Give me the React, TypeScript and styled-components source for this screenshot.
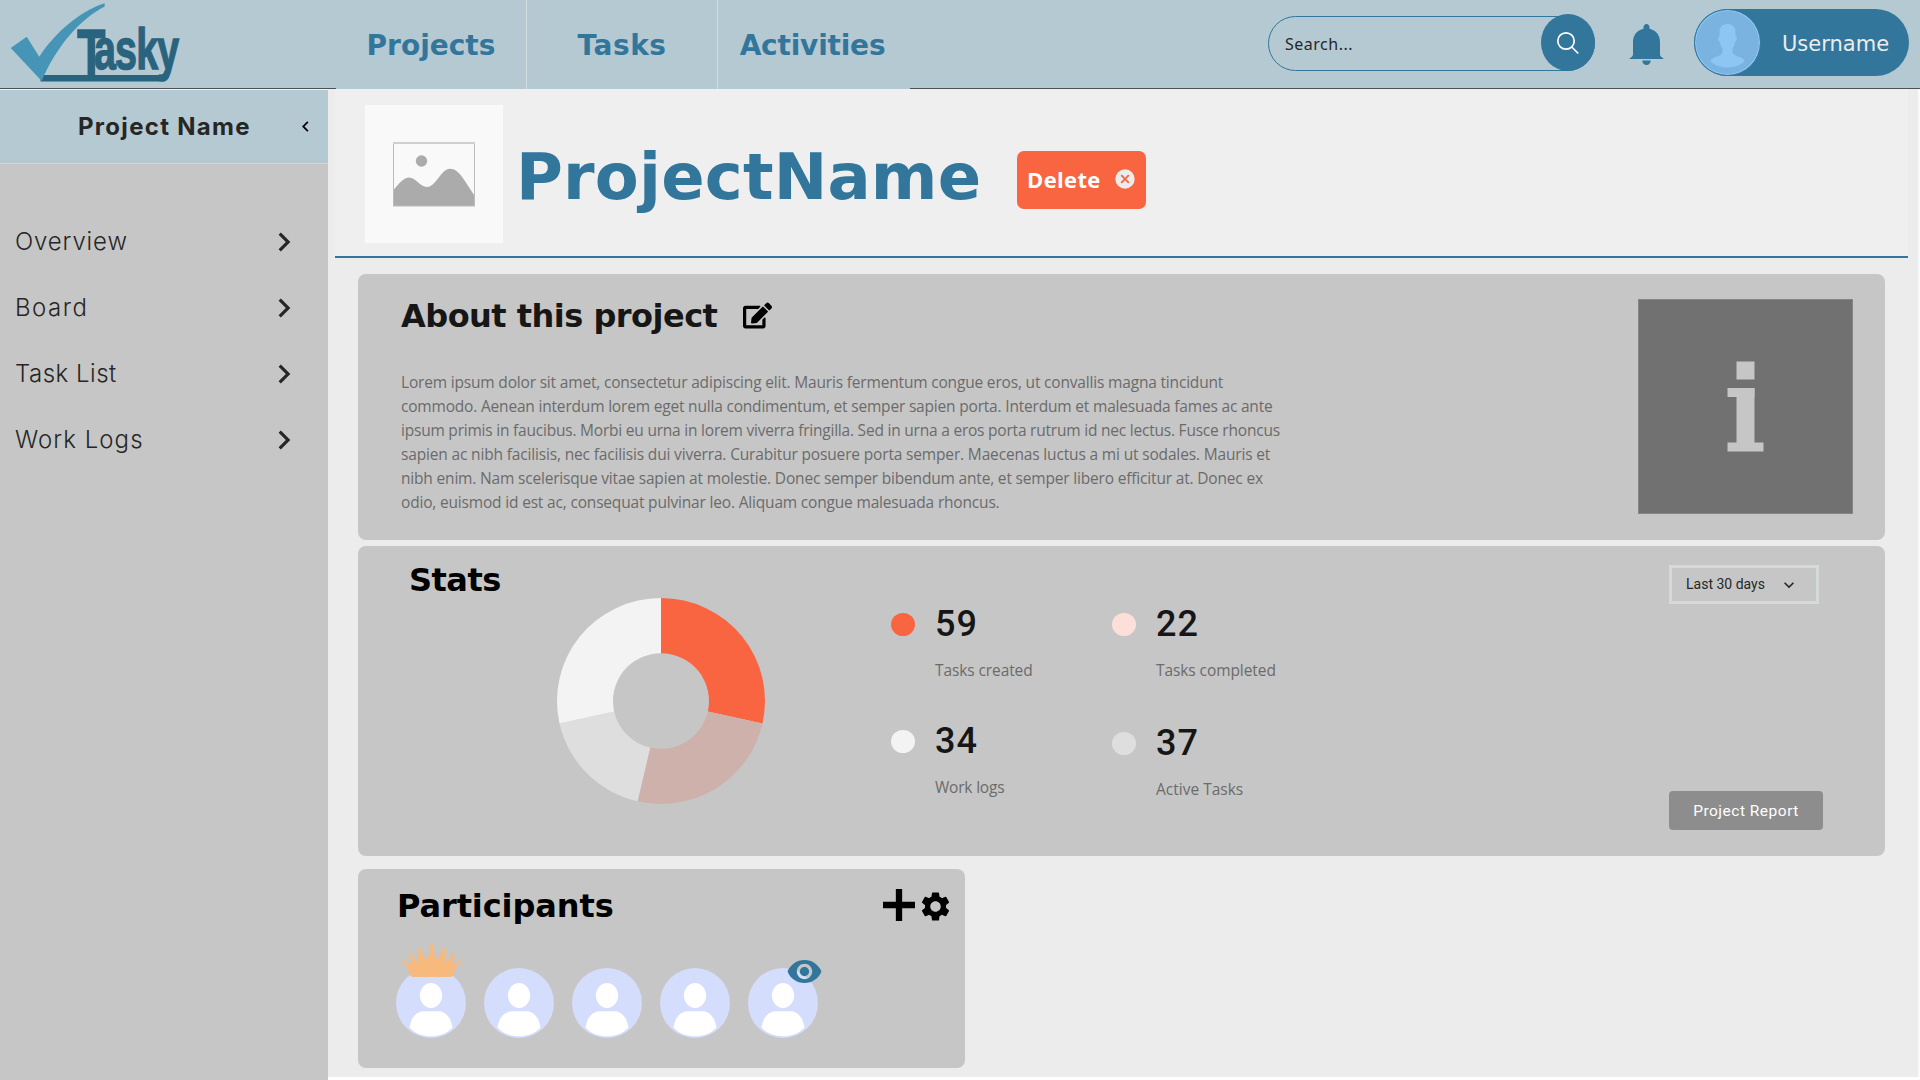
import React from "react";
import styled, { createGlobalStyle } from "styled-components";
import { MdChevronRight, MdChevronLeft, MdExpandMore, MdSettings, MdVisibility } from "react-icons/md";
import { FaEdit } from "react-icons/fa";

const C = {
  sky: "#b5c9d3",
  blue: "#32769c",
  orange: "#f96540",
  card: "#c6c6c6",
  page: "#ececec",
};
const HEAD = '"DejaVu Sans", Verdana, sans-serif';
const BODY = '"Open Sans", "Noto Sans", sans-serif';
const SIDE = 'Inter, "Noto Sans", sans-serif';

const Global = createGlobalStyle`
  * { box-sizing: border-box; }
  body { margin: 0; background: #fff; overflow: hidden; }
  svg { display: block; flex: none; }
`;

const Screen = styled.div`
  width: 1920px;
  height: 1080px;
  display: flex;
  flex-direction: column;
`;

/* ---------- top bar ---------- */
const TopBar = styled.header`
  display: flex;
  flex: none;
  height: 89px;
  background: ${C.sky};
`;
const LogoArea = styled.div`
  width: 336px;
  border-bottom: 1px solid #4d5258;
`;
const Nav = styled.nav`
  display: flex;
  width: 574px;
`;
const Tab = styled.a<{ $w: number; $ls: number; $last?: boolean }>`
  width: ${(p) => p.$w}px;
  height: 89px;
  padding-right: ${(p) => (p.$last ? 3 : 0)}px;
  border-right: ${(p) => (p.$last ? "none" : "1px solid #d4dade")};
  font: bold 28px/91px ${HEAD};
  letter-spacing: ${(p) => p.$ls}px;
  color: ${C.blue};
  text-align: center;
`;
const Tools = styled.div`
  flex: 1;
  display: flex;
  align-items: flex-start;
  padding-left: 358px;
  border-bottom: 1px solid #4d5258;
`;
const Search = styled.div`
  display: flex;
  justify-content: space-between;
  width: 327px;
  height: 55px;
  margin-top: 16px;
  padding-left: 16px;
  border: 1px solid ${C.blue};
  border-radius: 28px;
  font: 16px/54px "Noto Sans", sans-serif;
  letter-spacing: 0.5px;
  color: #262626;
`;
const SearchButton = styled.button`
  display: flex;
  align-items: center;
  justify-content: center;
  width: 54px;
  height: 57px;
  margin: -3px -1px 0 0;
  padding: 0;
  border: 0;
  border-radius: 50%;
  background: ${C.blue};
`;
const BellSlot = styled.div`
  margin: 24px 30px 0 34px;
`;
const UserPill = styled.div`
  display: flex;
  width: 215px;
  height: 67px;
  margin-top: 9px;
  border-radius: 34px;
  background: ${C.blue};
  font: 21px/70px ${HEAD};
  color: #ececec;
`;
const UserAvatar = styled.div`
  width: 67px;
  height: 67px;
  margin-right: 21px;
  border: 1px solid ${C.blue};
  border-radius: 50%;
  background: #7ab3e0;
  box-shadow: inset 0 0 0 1px #8ec8f8;
  overflow: hidden;
`;

/* ---------- sidebar ---------- */
const Content = styled.div`
  display: flex;
  flex: 1;
`;
const Sidebar = styled.aside`
  width: 328px;
  border-top: 1px solid #f4f4f4;
  background: ${C.card};
`;
const SideHead = styled.div`
  display: flex;
  align-items: center;
  height: 74px;
  padding-left: 78px;
  border-bottom: 1px solid #d0d6d9;
  background: ${C.sky};
`;
const SideTitle = styled.div`
  width: 217px;
  font: bold 24px/73px ${SIDE};
  letter-spacing: 1.3px;
  color: #262626;
`;
const SideList = styled.div`
  padding-top: 45px;
`;
const SideItem = styled.div<{ $ls: number }>`
  display: flex;
  align-items: center;
  justify-content: space-between;
  height: 66px;
  padding: 0 25px 0 15px;
  font: 300 24px/66px ${SIDE};
  letter-spacing: ${(p) => p.$ls}px;
  color: #262626;
`;

/* ---------- main ---------- */
const Main = styled.main`
  flex: 1;
  height: 988px;
  padding-left: 7px;
  border-right: 2px solid #fafafa;
  background: ${C.page};
`;
const ProjectHeader = styled.section`
  display: flex;
  width: 1573px;
  height: 169px;
  padding-left: 30px;
  border-bottom: 2px solid ${C.blue};
  background: #efefef;
`;
const Thumb = styled.div`
  display: flex;
  align-items: center;
  justify-content: center;
  width: 138px;
  height: 138px;
  margin-top: 16px;
  background: #f9f9f9;
`;
const ProjectTitle = styled.h1`
  width: 501px;
  margin: 50px 0 0 13px;
  font: bold 64px/76px ${HEAD};
  letter-spacing: 0.2px;
  color: ${C.blue};
`;
const DeleteButton = styled.button`
  display: flex;
  align-items: center;
  gap: 14px;
  width: 129px;
  height: 58px;
  margin-top: 62px;
  padding: 0 0 2px 10px;
  border: 0;
  border-radius: 7px;
  background: ${C.orange};
  font: bold 22px/56px ${BODY};
  letter-spacing: 0.35px;
  color: #fff;
`;
const Cards = styled.div`
  display: flex;
  flex-direction: column;
  width: 1550px;
  padding: 16px 0 0 23px;
`;
const Card = styled.section<{ $h: number; $w?: number; $mt?: number }>`
  display: flex;
  width: ${(p) => p.$w ?? 1527}px;
  height: ${(p) => p.$h}px;
  margin-top: ${(p) => p.$mt ?? 0}px;
  border-radius: 8px;
  background: ${C.card};
`;
const Heading = styled.h2<{ $ls?: number; $color?: string }>`
  margin: 0;
  font: bold 32px/40px ${HEAD};
  letter-spacing: ${(p) => p.$ls ?? 0}px;
  color: ${(p) => p.$color ?? "#000"};
  white-space: nowrap;
`;
const AboutText = styled.div`
  width: 1280px;
  padding: 22px 0 0 43px;
`;
const AboutTop = styled.div`
  display: flex;
  align-items: center;
  gap: 26px;
`;
const EditSlot = styled.div`
  padding-bottom: 2px;
`;
const Paragraph = styled.p`
  margin: 34px 0 0;
  font: 15.5px/24px ${BODY};
  color: #6b6b6b;
`;
const Line = styled.span<{ $ls: number }>`
  display: block;
  letter-spacing: ${(p) => p.$ls}px;
  white-space: nowrap;
`;
const InfoBox = styled.div`
  width: 215px;
  height: 215px;
  margin-top: 25px;
  border: 1px solid #858585;
  background: #717171;
`;
const StatsTitle = styled.div`
  width: 147px;
  padding: 14px 0 0 51px;
`;
const ChartSlot = styled.div`
  width: 386px;
  padding: 52px 0 0 52px;
`;
const Legend = styled.div`
  display: grid;
  grid-template-columns: 221px 330px;
  grid-template-rows: 117px 117px;
  width: 551px;
  padding-top: 54px;
`;
const Stat = styled.div<{ $dy?: number }>`
  display: grid;
  grid-template-columns: 24px 1fr;
  grid-template-rows: 48px 44px;
  column-gap: 20px;
  align-content: start;
  align-items: center;
  padding-top: ${(p) => p.$dy ?? 0}px;
`;
const Dot = styled.span<{ $c: string }>`
  width: 24px;
  height: 23px;
  border-radius: 50%;
  background: ${(p) => p.$c};
`;
const StatValue = styled.span`
  font: 500 36px/50px Roboto, sans-serif;
  letter-spacing: 1.1px;
  color: #161616;
`;
const StatLabel = styled.span<{ $ls: number }>`
  grid-column: 2;
  font: 15.5px/24px ${BODY};
  letter-spacing: ${(p) => p.$ls}px;
  color: #6b6b6b;
`;
const StatsActions = styled.div`
  display: flex;
  flex-direction: column;
  justify-content: space-between;
  margin-left: 227px;
  padding: 19px 0 26px;
`;
const Period = styled.div`
  display: flex;
  align-items: center;
  gap: 14px;
  width: 150px;
  height: 39px;
  padding-left: 14px;
  border: 3px solid #d5d9da;
  font: 14px/33px Roboto, sans-serif;
  letter-spacing: 0;
  color: #262626;
`;
const ReportButton = styled.button`
  width: 154px;
  height: 39px;
  padding: 1px 0 0;
  border: 0;
  border-radius: 4px;
  background: #8d8d8d;
  font: 15.5px/38px Roboto, sans-serif;
  letter-spacing: 0.5px;
  color: #fff;
`;
const People = styled.div`
  flex: 1;
  display: flex;
  flex-direction: column;
  padding: 17px 15px 0 38px;
`;
const PeopleTop = styled.div`
  display: flex;
  align-items: center;
  justify-content: space-between;
  padding-left: 1px;
`;
const PeopleTools = styled.div`
  display: flex;
  align-items: center;
  gap: 3px;
  margin-right: -3px;
`;
const PlusSlot = styled.div`
  padding-bottom: 2px;
`;
const Row = styled.div`
  display: flex;
  gap: 18px;
  margin-top: 42px;
`;
const Person = styled.div`
  position: relative;
  width: 70px;
  height: 70px;
`;
const Badge = styled.div<{ $x: number; $y: number }>`
  position: absolute;
  left: ${(p) => p.$x}px;
  top: ${(p) => p.$y}px;
`;

/* ---------- drawings ---------- */
const Logo = () => (
  <svg width="220" height="88" viewBox="0 0 220 88" overflow="visible">
    <path d="M40.500 75H160c2.500 0 3.500-1 4.300-4l4.700 4c-1.500 4.500-3 6.500-6.500 6.500H40.500z" fill="#2a637e" />
    <text
      transform="translate(77.300 77) scale(.68 1)"
      fill="#2a637e"
      stroke="#2a637e"
      strokeWidth="1.400"
      fontFamily='"Liberation Sans", Arial, sans-serif'
      fontWeight="bold"
    >
      <tspan fontSize="68">T</tspan>
      <tspan fontSize="58" dx="-17" dy="-7.700" letterSpacing="-1.200">asky</tspan>
    </text>
    <path d="M10.700 48 26.700 36.700 39.300 56.700C55 33 80 11 104.700 3.300V6.500C80 19 56 47 41.700 81z" fill="#4695b6" />
  </svg>
);

const Bell = () => (
  <svg width="35" height="41" viewBox="0 0 35 41">
    <path
      fill={C.blue}
      d="M17.500 0c1.700 0 3 1.400 3 3.200v1.500C27 6.300 31 11 31 18v12.500c0 1 .6 1.700 1.500 2.500l1.800 1.400c.5.400.700.6.700.600H0s.2-.2.7-.600L2.500 33C3.400 32.200 4 31.500 4 30.500V18C4 11 8 6.300 14.500 4.700V3.200C14.500 1.400 15.800 0 17.500 0zM13.300 36.500h8.400c0 2.500-1.800 4.500-4.200 4.500s-4.200-2-4.200-4.500z"
    />
  </svg>
);

const Silhouette = () => (
  <svg width="65" height="65" viewBox="0 0 65 65">
    <path
      fill="#8cc6f5"
      d="M32.500 14c5.200 0 8 3 8 8v4.500c2.200 0 1.500 5-.5 5.500-.4 3.500-1.500 5-2.500 6.500v3.500c1 3.500 5 4.200 7.500 5.200 2 .8 4.500 2.300 4.500 3.800-3.500 4.300-10 6.500-17 6.500s-13.500-2.200-17-6.500c0-1.500 2.500-3 4.500-3.800 2.500-1 6.500-1.700 7.500-5.200v-3.500c-1-1.500-2.100-3-2.500-6.500-2-.5-2.700-5.500-.5-5.500V22c0-5 2.800-8 8-8z"
    />
  </svg>
);

const Picture = () => (
  <svg width="82" height="65" viewBox="0 0 82 65">
    <path d="M0 49C6 41 11 35.500 16 35.500c7 0 11 9.500 18 9.500 9 0 14-18.300 23-18.300 9.500 0 15 13.300 25 27.300v10H0z" fill="#ababab" />
    <circle cx="28.500" cy="19" r="5.700" fill="#ababab" />
    <rect x=".5" y=".5" width="81" height="63.500" fill="none" stroke="#bcbcbc" />
    <path d="M0 1h82" stroke="#cfcfcf" strokeWidth="2" />
  </svg>
);

const Donut = () => {
  const cx = 104, cy = 103;
  const slices = [
    { from: 0, to: 102.600, c: C.orange },
    { from: 102.600, to: 193, c: "#ceb1ab" },
    { from: 193, to: 257.400, c: "#dedede" },
    { from: 257.400, to: 360, c: "#f3f3f3" },
  ];
  const at = (deg: number, rx: number, ry: number) => {
    const a = (deg * Math.PI) / 180;
    return `${cx + rx * Math.sin(a)} ${cy - ry * Math.cos(a)}`;
  };
  return (
    <svg width="208" height="206" viewBox="0 0 208 206">
      {slices.map((s) => (
        <path
          key={s.from}
          fill={s.c}
          d={`M${at(s.from, 104, 103)}A104 103 0 0 1 ${at(s.to, 104, 103)}L${at(s.to, 48, 47.800)}A48 47.800 0 0 0 ${at(s.from, 48, 47.800)}Z`}
        />
      ))}
    </svg>
  );
};

const Face = () => (
  <svg width="70" height="70" viewBox="0 0 70 70">
    <circle cx="35" cy="35" r="35" fill="#d5ddfc" />
    <ellipse cx="35" cy="27.500" rx="11.100" ry="12.400" fill="#fff" />
    <path d="M13.400 59.500C15 50 20 43.300 28 43.300h14C50 43.300 55 50 56.600 59.500 51 65.500 43.500 68.300 35 68.300S19 65.500 13.400 59.500z" fill="#fff" />
  </svg>
);

const Crown = () => (
  <svg width="60" height="33" viewBox="0 0 60 33" fill="#f8ba7c">
    <path d="M11 33C7.500 33 7.500 27 4.500 21.500L2 19.500 3.500 18c2 1.300 3 1.800 5 1.300.6-1.500.5-4-.5-7l1.500-.800L15.300 18.300l1.700-12h1.500l6.200 10.500L29 2h1.400L34.800 16.800l6.200-10.500h1.500l1.700 12 5.800-6.800 1.500.8c-1 3-1.100 5.500-.5 7 2 .5 3 0 5-1.300l1.500 1.500-2.500 2C52 27 52 33 48.500 33z" />
    <circle cx="2" cy="18.400" r="2" />
    <circle cx="8.700" cy="11.500" r="2.100" />
    <circle cx="17.800" cy="6" r="2.100" />
    <circle cx="29.700" cy="2.200" r="2.200" />
    <circle cx="41.600" cy="6" r="2.100" />
    <circle cx="50.800" cy="11.500" r="2.100" />
    <circle cx="57.400" cy="18.400" r="2" />
  </svg>
);

const sideItems = [
  { t: "Overview", ls: 0.85 },
  { t: "Board", ls: 1.5 },
  { t: "Task List", ls: 0.5 },
  { t: "Work Logs", ls: 1.05 },
];

const about = [
  { t: "Lorem ipsum dolor sit amet, consectetur adipiscing elit. Mauris fermentum congue eros, ut convallis magna tincidunt", ls: -0.18 },
  { t: "commodo. Aenean interdum lorem eget nulla condimentum, et semper sapien porta. Interdum et malesuada fames ac ante", ls: -0.19 },
  { t: "ipsum primis in faucibus. Morbi eu urna in lorem viverra fringilla. Sed in urna a eros porta rutrum id nec lectus. Fusce rhoncus", ls: -0.215 },
  { t: "sapien ac nibh facilisis, nec facilisis dui viverra. Curabitur posuere porta semper. Maecenas luctus a mi ut sodales. Mauris et", ls: -0.16 },
  { t: "nibh enim. Nam scelerisque vitae sapien at molestie. Donec semper bibendum ante, et semper libero efficitur at. Donec ex", ls: -0.18 },
  { t: "odio, euismod id est ac, consequat pulvinar leo. Aliquam congue malesuada rhoncus.", ls: -0.18 },
];

const stats = [
  { n: 59, t: "Tasks created", c: C.orange, ls: -0.1, dy: 0 },
  { n: 22, t: "Tasks completed", c: "#fddfd9", ls: -0.08, dy: 0 },
  { n: 34, t: "Work logs", c: "#f3f3f3", ls: -0.2, dy: 0 },
  { n: 37, t: "Active Tasks", c: "#dedede", ls: 0, dy: 2 },
];

export default function App() {
  return (
    <Screen>
      <Global />
      <TopBar>
        <LogoArea><Logo /></LogoArea>
        <Nav>
          <Tab $w={191} $ls={0}>Projects</Tab>
          <Tab $w={191} $ls={0.5}>Tasks</Tab>
          <Tab $w={192} $ls={-0.2} $last>Activities</Tab>
        </Nav>
        <Tools>
          <Search>
            Search...
            <SearchButton>
              <svg width="24" height="24" viewBox="0 0 24 24" fill="none" stroke="#fff" strokeWidth="1.700">
                <circle cx="10" cy="10" r="8.200" />
                <path d="M15.800 16l6.500 6.500" />
              </svg>
            </SearchButton>
          </Search>
          <BellSlot><Bell /></BellSlot>
          <UserPill>
            <UserAvatar><Silhouette /></UserAvatar>
            Username
          </UserPill>
        </Tools>
      </TopBar>
      <Content>
        <Sidebar>
          <SideHead>
            <SideTitle>Project Name</SideTitle>
            <MdChevronLeft size={21} />
          </SideHead>
          <SideList>
            {sideItems.map((i) => (
              <SideItem key={i.t} $ls={i.ls}>
                {i.t}
                <MdChevronRight size={38} />
              </SideItem>
            ))}
          </SideList>
        </Sidebar>
        <Main>
          <ProjectHeader>
            <Thumb><Picture /></Thumb>
            <ProjectTitle>ProjectName</ProjectTitle>
            <DeleteButton>
              Delete
              <svg width="20" height="20" viewBox="0 0 20 20">
                <circle cx="10" cy="10" r="9.700" fill="#ececec" />
                <path d="M6.200 6.200l7.600 7.600M13.800 6.200l-7.600 7.600" stroke={C.orange} strokeWidth="1.800" />
              </svg>
            </DeleteButton>
          </ProjectHeader>
          <Cards>
            <Card $h={266}>
              <AboutText>
                <AboutTop>
                  <Heading $ls={-0.52} $color="#161616">About this project</Heading>
                  <EditSlot><FaEdit size={29} /></EditSlot>
                </AboutTop>
                <Paragraph>
                  {about.map((l) => (
                    <Line key={l.t} $ls={l.ls}>{l.t}</Line>
                  ))}
                </Paragraph>
              </AboutText>
              <InfoBox>
                <svg width="213" height="213" viewBox="0 0 213 213" fill="#c6c6c6">
                  <rect x="97.500" y="61.500" width="18" height="18" />
                  <rect x="88.500" y="88" width="27" height="9" />
                  <rect x="97.500" y="88" width="18" height="60" />
                  <rect x="88.500" y="142.500" width="36" height="9" />
                </svg>
              </InfoBox>
            </Card>
            <Card $h={310} $mt={6}>
              <StatsTitle><Heading $ls={-0.5}>Stats</Heading></StatsTitle>
              <ChartSlot><Donut /></ChartSlot>
              <Legend>
                {stats.map((s) => (
                  <Stat key={s.t} $dy={s.dy}>
                    <Dot $c={s.c} />
                    <StatValue>{s.n}</StatValue>
                    <StatLabel $ls={s.ls}>{s.t}</StatLabel>
                  </Stat>
                ))}
              </Legend>
              <StatsActions>
                <Period>Last 30 days <MdExpandMore size={20} /></Period>
                <ReportButton>Project Report</ReportButton>
              </StatsActions>
            </Card>
            <Card $h={199} $w={607} $mt={13}>
              <People>
                <PeopleTop>
                  <Heading $ls={-0.1}>Participants</Heading>
                  <PeopleTools>
                    <PlusSlot>
                      <svg width="32" height="32" viewBox="0 0 32 32">
                        <path d="M16 0v32M0 16h32" stroke="#000" strokeWidth="6.300" />
                      </svg>
                    </PlusSlot>
                    <MdSettings size={35} />
                  </PeopleTools>
                </PeopleTop>
                <Row>
                  {[0, 1, 2, 3, 4].map((n) => (
                    <Person key={n}>
                      <Face />
                      {n === 0 && <Badge $x={6} $y={-24}><Crown /></Badge>}
                      {n === 4 && <Badge $x={38} $y={-15}><MdVisibility size={37} color={C.blue} /></Badge>}
                    </Person>
                  ))}
                </Row>
              </People>
            </Card>
          </Cards>
        </Main>
      </Content>
    </Screen>
  );
}
